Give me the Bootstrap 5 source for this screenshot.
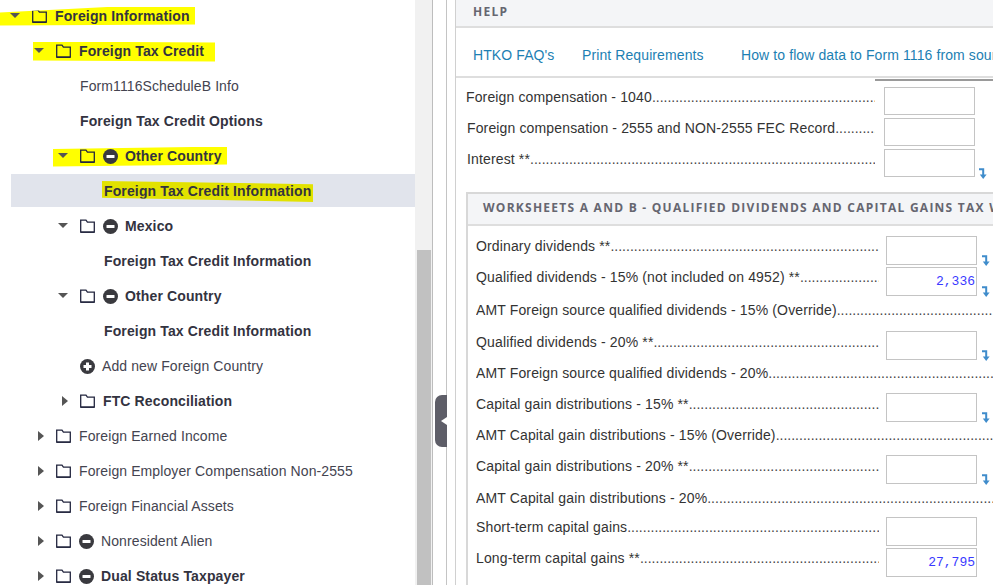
<!DOCTYPE html>
<html lang="en"><head><meta charset="utf-8"><title>Foreign Information</title>
<link rel="stylesheet" href="https://cdn.jsdelivr.net/npm/bootstrap@5.3.0/dist/css/bootstrap.min.css">
<style>
html,body{height:585px;overflow:hidden;background:#fff}
body{font-family:"Liberation Sans",Arial,sans-serif;font-size:14px;color:#333}
.app-frame{height:585px;width:993px}
.tree-pane{width:415px;flex:none;overflow:hidden;margin-top:-1px;color:#444450}
.tree-row{height:35px;white-space:nowrap;letter-spacing:.1px}
.tree-row.is-strong{font-weight:700;color:#33333f;letter-spacing:.13px}
.lv0{padding-left:10px}.lv1{padding-left:34px}.lv2{padding-left:58px}
.leaf1{padding-left:80px}.leaf2{padding-left:104px}
.caret-slot{width:22px;flex:none;display:flex;align-items:center}
.caret-down{width:0;height:0;border-left:5px solid transparent;border-right:5px solid transparent;border-top:5px solid #555;margin-top:-2px}
.caret-right{width:0;height:0;border-top:5px solid transparent;border-bottom:5px solid transparent;border-left:6px solid #555;margin-left:3.5px;margin-top:-2px}
.ic-folder{width:15px;height:14px;flex:none;margin-right:8px;margin-top:-1px}
.ic-round{width:15px;height:15px;flex:none;margin-top:-1px;margin-right:7px}
.hl{background:#ff0;display:inline-flex;align-items:center;height:20px}
.hl-a{margin-left:-10px;padding-left:10px;width:195px;clip-path:polygon(0 30%,60% 0,100% 0,100% 90%,0 95%)}
.hl-b{margin-left:-1px;padding-left:1px;width:182px;clip-path:polygon(0 0,100% 5%,100% 100%,0 95%)}
.hl-c{margin-left:-5px;padding-left:5px;width:174px;clip-path:polygon(0 12%,100% 0,100% 90%,0 100%)}
.hl-d{background:#e2e200;margin-left:-2px;padding-left:2px;width:211px;height:21px;clip-path:polygon(0 0,100% 15%,100% 100%,0 80%)}
.is-current{background:#e1e4ec;margin-left:11px;padding:2px 0 0 93px;height:33px;margin-top:0;margin-bottom:2px}
.scroll-track{width:17px;flex:none;background:#f1f1f1;padding:250px 1px 0 2px}
.scroll-thumb{height:335px;background:#c1c1c1}
.split-gutter{width:15px;flex:none;border-left:1px solid #bdbdbd;border-right:1px solid #c4c4c4;position:relative}
.split-handle{position:absolute;left:2px;right:-1px;top:395px;height:52px;background:#5e5e68;border-radius:7px 0 0 7px;display:flex;align-items:center;padding-left:7px}
.tri-left{width:0;height:0;border-top:4px solid transparent;border-bottom:4px solid transparent;border-right:6px solid #fff;margin-left:-1px}
.gap-col{width:8px;flex:none}
.main-pane{flex:1 1 auto;min-width:0;border-left:1px solid #d0d0d0;overflow:hidden}
.head-bar{background:#f4f5f7;border-bottom:2px solid #dedede;font-family:"Open Sans",sans-serif;font-weight:700;color:#666670;white-space:nowrap;font-size:12px;letter-spacing:1.25px}
.help-head{height:28px;padding:5px 0 0 17px;line-height:13px}
.link-row{height:50px;border-bottom:2px solid #dedede;white-space:nowrap;padding:7px 0 0 17px;letter-spacing:.1px}
.link-row a{color:#1d7fb3;text-decoration:none;flex:none}
.lk1{width:109px}.lk2{width:159px}
.top-form{padding:9px 0 0 10px;position:relative}
.rule-mark{position:absolute;left:419px;right:0;top:1px;height:2px;background:#9a9a9a}
.f-row{display:flex;align-items:flex-start;white-space:nowrap;color:#333;line-height:20px;letter-spacing:.14px}
.top-form .f-row{height:31px}
.f-label{flex:none}
.label-low{padding-top:1px}
.f-fill{overflow:hidden;flex:1 1 0;min-width:0;color:#444;letter-spacing:0}
.label-low+.f-fill{padding-top:1px}
.f-fill::after{content:"................................................................................................................................................................................................................................................";}
.f-ctrl{flex:none;width:91px;height:28px;border:1px solid #c4c4c4;border-radius:0;padding:0 1px 0 0;text-align:right;font-family:"Liberation Mono",monospace;font-size:13px;letter-spacing:0;color:#3a3aff;background:#fff;outline:0;display:block}
.ctl-top{margin-left:9px}
.sec-ctrl{margin-left:7px;height:29px}
.top-limit{width:509px}
.second-limit{width:508px}
.shift1{padding-left:1px}
.flow-mark{width:9px;height:11px;flex:none;margin:19px 0 0 4px}
.top-form .flow-mark{margin-left:3px}
.sec-box{margin:12px 0 0 10px;border-top:2px solid #d8d8d8;border-left:2px solid #d8d8d8}
.sec-head{height:32px;padding-left:15px;line-height:27px}
.sec-grid{display:grid;grid-template-rows:31px 33px 31px 32px 30px 32px 30px 33px 29px 31px 33px 31px;padding:10px 0 0 8px;width:600px}
.lim-row{width:501px}
.cut-row{overflow:hidden}
</style></head><body>
<svg width="0" height="0" class="d-block"><defs>
<symbol id="f" viewBox="0 0 15 14"><path d="M.7 13.2V1.2H6l1.4 2H14.3v10Z" fill="none" stroke="#23263f" stroke-width="1.3"/><path d="M.7 13.2H14.3" stroke="#23263f" stroke-width="1.4"/></symbol>
<symbol id="m" viewBox="0 0 15 15"><circle cx="7.5" cy="7.5" r="7.5" fill="#3a3a3f"/><rect x="3.5" y="6" width="8" height="3" rx=".5" fill="#fff"/></symbol>
<symbol id="p" viewBox="0 0 15 15"><circle cx="7.5" cy="7.5" r="7.5" fill="#3a3a3f"/><path d="M6 3.5h3V6h2.5v3H9v2.5H6V9H3.5V6H6Z" fill="#fff"/></symbol>
<symbol id="a" viewBox="0 0 9 11"><path d="M1 1.2H5.2V7" fill="none" stroke="#3f8ccb" stroke-width="2"/><path d="M1.8 6.5H8.6L5.2 11Z" fill="#3f8ccb"/></symbol>
</defs></svg>
<div class="d-flex app-frame">
<div class="tree-pane">
<div class="tree-row is-strong lv0 d-flex align-items-center"><span class="hl hl-a"><span class="caret-slot"><span class="caret-down"></span></span><svg class="ic-folder"><use href="#f"/></svg>Foreign Information</span></div>
<div class="tree-row is-strong lv1 d-flex align-items-center"><span class="hl hl-b"><span class="caret-slot"><span class="caret-down"></span></span><svg class="ic-folder"><use href="#f"/></svg>Foreign Tax Credit</span></div>
<div class="tree-row leaf1 d-flex align-items-center">Form1116ScheduleB Info</div>
<div class="tree-row is-strong leaf1 d-flex align-items-center">Foreign Tax Credit Options</div>
<div class="tree-row is-strong lv2 d-flex align-items-center"><span class="hl hl-c"><span class="caret-slot"><span class="caret-down"></span></span><svg class="ic-folder"><use href="#f"/></svg><svg class="ic-round"><use href="#m"/></svg>Other Country</span></div>
<div class="tree-row is-strong is-current d-flex align-items-center"><span class="hl hl-d">Foreign Tax Credit Information</span></div>
<div class="tree-row is-strong lv2 d-flex align-items-center"><span class="caret-slot"><span class="caret-down"></span></span><svg class="ic-folder"><use href="#f"/></svg><svg class="ic-round"><use href="#m"/></svg>Mexico</div>
<div class="tree-row is-strong leaf2 d-flex align-items-center">Foreign Tax Credit Information</div>
<div class="tree-row is-strong lv2 d-flex align-items-center"><span class="caret-slot"><span class="caret-down"></span></span><svg class="ic-folder"><use href="#f"/></svg><svg class="ic-round"><use href="#m"/></svg>Other Country</div>
<div class="tree-row is-strong leaf2 d-flex align-items-center">Foreign Tax Credit Information</div>
<div class="tree-row leaf1 d-flex align-items-center"><svg class="ic-round"><use href="#p"/></svg>Add new Foreign Country</div>
<div class="tree-row is-strong lv2 d-flex align-items-center"><span class="caret-slot"><span class="caret-right"></span></span><svg class="ic-folder"><use href="#f"/></svg>FTC Reconciliation</div>
<div class="tree-row lv1 d-flex align-items-center"><span class="caret-slot"><span class="caret-right"></span></span><svg class="ic-folder"><use href="#f"/></svg>Foreign Earned Income</div>
<div class="tree-row lv1 d-flex align-items-center"><span class="caret-slot"><span class="caret-right"></span></span><svg class="ic-folder"><use href="#f"/></svg>Foreign Employer Compensation Non-2555</div>
<div class="tree-row lv1 d-flex align-items-center"><span class="caret-slot"><span class="caret-right"></span></span><svg class="ic-folder"><use href="#f"/></svg>Foreign Financial Assets</div>
<div class="tree-row lv1 d-flex align-items-center"><span class="caret-slot"><span class="caret-right"></span></span><svg class="ic-folder"><use href="#f"/></svg><svg class="ic-round"><use href="#m"/></svg>Nonresident Alien</div>
<div class="tree-row is-strong lv1 d-flex align-items-center"><span class="caret-slot"><span class="caret-right"></span></span><svg class="ic-folder"><use href="#f"/></svg><svg class="ic-round"><use href="#m"/></svg>Dual Status Taxpayer</div>
</div>
<div class="scroll-track"><div class="scroll-thumb"></div></div>
<div class="split-gutter"><div class="split-handle"><span class="tri-left"></span></div></div>
<div class="gap-col"></div>
<div class="main-pane">
<div class="head-bar help-head">HELP</div>
<div class="link-row d-flex align-items-center"><a class="lk1" href="#">HTKO FAQ's</a><a class="lk2" href="#">Print Requirements</a><a href="#">How to flow data to Form 1116 from source documents</a></div>
<div class="top-form"><div class="rule-mark"></div>
<div class="f-row top-limit"><span class="f-label">Foreign compensation - 1040</span><span class="f-fill"></span><input class="f-ctrl ctl-top" aria-label="Foreign compensation - 1040"></div>
<div class="f-row top-limit shift1"><span class="f-label">Foreign compensation - 2555 and NON-2555 FEC Record</span><span class="f-fill"></span><input class="f-ctrl ctl-top" aria-label="Foreign compensation 2555"></div>
<div class="f-row shift1"><div class="f-row second-limit"><span class="f-label">Interest **</span><span class="f-fill"></span><input class="f-ctrl ctl-top" aria-label="Interest"></div><svg class="flow-mark"><use href="#a"/></svg></div>
</div>
<div class="sec-box">
<div class="head-bar sec-head">WORKSHEETS A AND B - QUALIFIED DIVIDENDS AND CAPITAL GAINS TAX WORKSHEET</div>
<div class="sec-grid">
<div class="f-row"><div class="f-row lim-row"><span class="f-label">Ordinary dividends **</span><span class="f-fill"></span><input class="f-ctrl sec-ctrl" aria-label="Ordinary dividends"></div><svg class="flow-mark"><use href="#a"/></svg></div>
<div class="f-row"><div class="f-row lim-row"><span class="f-label">Qualified dividends - 15% (not included on 4952) **</span><span class="f-fill"></span><input class="f-ctrl sec-ctrl" value="2,336" aria-label="Qualified dividends 15%"></div><svg class="flow-mark"><use href="#a"/></svg></div>
<div class="f-row cut-row"><span class="f-label">AMT Foreign source qualified dividends - 15% (Override)</span><span class="f-fill"></span></div>
<div class="f-row"><div class="f-row lim-row"><span class="f-label label-low">Qualified dividends - 20% **</span><span class="f-fill"></span><input class="f-ctrl sec-ctrl" aria-label="Qualified dividends 20%"></div><svg class="flow-mark"><use href="#a"/></svg></div>
<div class="f-row cut-row"><span class="f-label">AMT Foreign source qualified dividends - 20%</span><span class="f-fill"></span></div>
<div class="f-row"><div class="f-row lim-row"><span class="f-label label-low">Capital gain distributions - 15% **</span><span class="f-fill"></span><input class="f-ctrl sec-ctrl" aria-label="Capital gain distributions 15%"></div><svg class="flow-mark"><use href="#a"/></svg></div>
<div class="f-row cut-row"><span class="f-label">AMT Capital gain distributions - 15% (Override)</span><span class="f-fill"></span></div>
<div class="f-row"><div class="f-row lim-row"><span class="f-label label-low">Capital gain distributions - 20% **</span><span class="f-fill"></span><input class="f-ctrl sec-ctrl" aria-label="Capital gain distributions 20%"></div><svg class="flow-mark"><use href="#a"/></svg></div>
<div class="f-row cut-row"><span class="f-label">AMT Capital gain distributions - 20%</span><span class="f-fill"></span></div>
<div class="f-row"><div class="f-row lim-row"><span class="f-label">Short-term capital gains</span><span class="f-fill"></span><input class="f-ctrl sec-ctrl" aria-label="Short-term capital gains"></div></div>
<div class="f-row"><div class="f-row lim-row"><span class="f-label">Long-term capital gains **</span><span class="f-fill"></span><input class="f-ctrl sec-ctrl" value="27,795" aria-label="Long-term capital gains"></div></div>
<div class="f-row"><span class="f-label">Short-term capital gains</span></div>
</div>
</div>
</div>
</div>
</body></html>
